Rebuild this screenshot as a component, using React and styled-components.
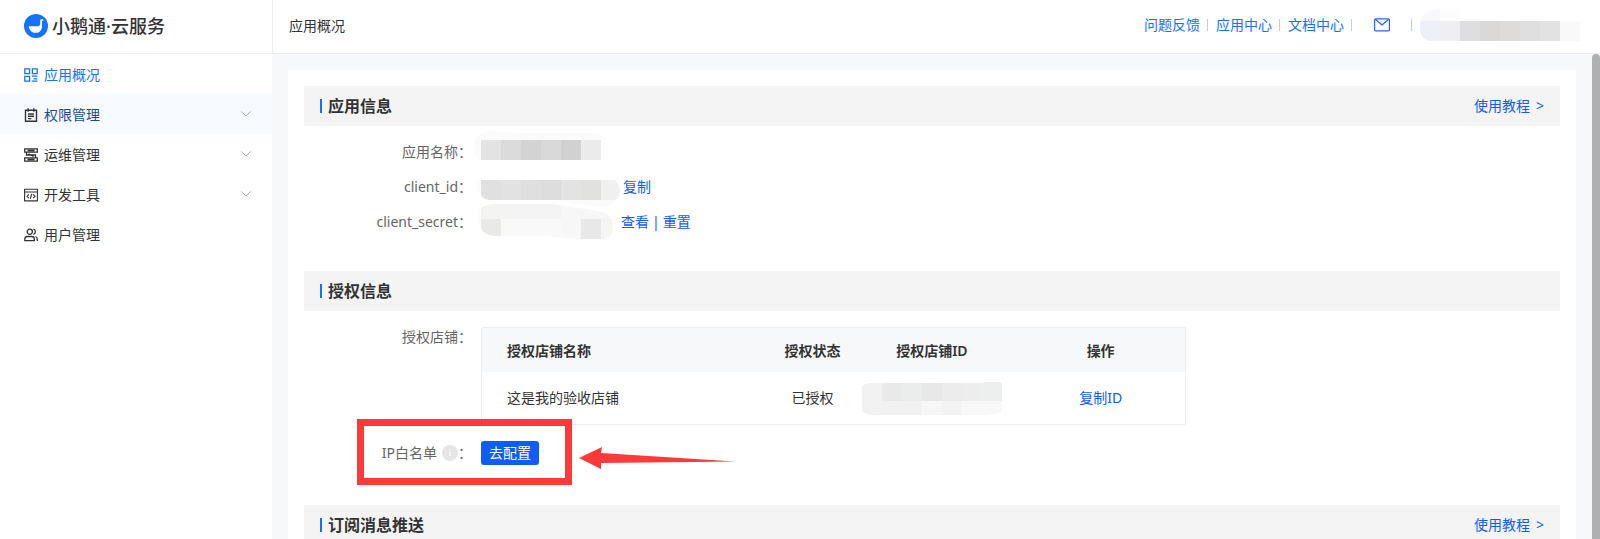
import styled, { createGlobalStyle } from "styled-components";

const GlobalStyle = createGlobalStyle`
    * {
        box-sizing: border-box;
    }
    body {
        margin: 0;
        font-family: "Noto Sans", "Noto Sans CJK SC", sans-serif;
        font-size: 14px;
        line-height: 20px;
        color: #333;
        background-color: #fff;
    }
`

const Page = styled.div`
    display: flex;
    flex-direction: column;
    height: 100vh;
`

const Header = styled.header`
    display: flex;
    flex: none;
    height: 54px;
    border-bottom: 1px solid #ebedf0;
`

const Brand = styled.div`
    display: flex;
    align-items: center;
    flex: none;
    width: 273px;
    padding: 0 24px 2px;
    gap: 4px;
    border-right: 1px solid #ebedf0;
    font-size: 18px;
    font-weight: 500;
    line-height: 24px;
`

const TopBar = styled.div`
    display: flex;
    flex: 1;
    align-items: center;
    justify-content: space-between;
    padding: 0 20px 2px 16px;
`

const PageTitle = styled.h1`
    margin: 0;
    font-size: 14px;
    font-weight: 400;
`

const TopLinks = styled.nav`
    display: flex;
    align-items: center;
    gap: 7px;
    padding-bottom: 2px;
`

const Separator = styled.span`
    width: 1px;
    height: 12px;
    margin-right: 1px;
    background-color: #ccc;
`

const Link = styled.a`
    color: ${(props) => props.$bright ? "#1472ff" : "#105cfb"};
    text-decoration: none;
`

const HelpLink = styled(Link)`
    display: flex;
    gap: 6px;
`

const MailLink = styled.a`
    display: flex;
    margin: 0 14px;
`

const Body = styled.div`
    display: flex;
    flex: 1;
    min-height: 0;
`

const Sidebar = styled.nav`
    flex: none;
    width: 272px;
`

const MenuItem = styled.a`
    display: flex;
    align-items: center;
    height: 40px;
    padding: 2px 20px 0 24px;
    gap: 6px;
    text-decoration: none;
    color: ${(props) => props.$color || "#333"};
    background-color: ${(props) => props.$hover ? "#f7fbff" : "transparent"};

    svg {
        flex: none;
    }
`

const MenuText = styled.span`
    flex: 1;
`

const Arrow = styled.svg`
    margin-bottom: 2px;
`

const Content = styled.main`
    flex: 1;
    min-width: 0;
    padding: 16px 16px 0;
    overflow-y: auto;
    scrollbar-width: none;
    background-color: #f6f8fa;
`

const Card = styled.div`
    padding: 16px;
    background-color: #fff;
`

const ScrollTrack = styled.div`
    flex: none;
    width: 8px;
    background-color: #f6f8fa;
    overflow: hidden;
`

const ScrollThumb = styled.div`
    height: 100%;
    border-radius: 4px 4px 0 0;
    background-color: #b0b0b2;
`

const SectionHead = styled.div`
    display: flex;
    align-items: center;
    justify-content: space-between;
    height: 40px;
    padding: 0 16px;
    background-color: #f4f4f4;
`

const SectionTitle = styled.h2`
    display: flex;
    align-items: center;
    gap: 6px;
    margin: 0;
    font-size: 16px;
    font-weight: 600;

    &::before {
        content: "";
        width: 2px;
        height: 14px;
        background-color: #1472ff;
    }
`

const InfoList = styled.div`
    padding: 8px 0 32px;
`

const AuthList = styled.div`
    display: flex;
    flex-direction: column;
    gap: 16px;
    padding: 16px 0 40px;
`

const Row = styled.div`
    display: flex;
    align-items: ${(props) => props.$top ? "flex-start" : "center"};
    min-height: ${(props) => props.$tall ? "35px" : "24px"};
`

const Label = styled.div`
    display: flex;
    align-items: center;
    justify-content: flex-end;
    flex: none;
    width: 168px;
    margin-right: 9px;
    color: #666;
`

const Value = styled.div`
    display: flex;
    align-items: center;
    flex: 1;
    gap: 3px;
    color: #105cfb;

    svg {
        flex: none;
        overflow: visible;
    }
`

const ShopTable = styled.table`
    width: 100%;
    max-width: 705px;
    border: 1px solid #ebedf0;
    border-radius: 2px;
    border-spacing: 0;
    table-layout: fixed;
    text-align: center;

    th {
        height: 44px;
        padding: 2px 0 0;
        font-weight: 600;
        background-color: #f6f8fa;
    }
    td {
        height: 52px;
        padding: 0;
    }
    th:first-child,
    td:first-child {
        padding-left: 25px;
        text-align: left;
    }
    svg {
        display: block;
        margin: 0 auto;
    }
`

const InfoDot = styled.span`
    display: flex;
    margin-left: 5px;
`

const ConfigButton = styled.button`
    height: 24px;
    padding: 0 8px;
    border: none;
    border-radius: 3px;
    color: #fff;
    background-color: #105cfb;
    font: inherit;
    cursor: pointer;
`

const Highlighted = styled.div`
    position: relative;
`

const RedBox = styled.div`
    position: absolute;
    top: -22px;
    left: 53px;
    width: 215px;
    height: 66px;
    border: 7px solid #fc3a39;
    pointer-events: none;
`

const RedArrow = styled.svg`
    position: absolute;
    top: 5px;
    left: 275px;
    pointer-events: none;
`

const Logo = () => (
    <svg width="24" height="24" viewBox="0 0 24 24" aria-hidden="true">
        <circle cx="12" cy="12" r="12" fill="#1472ff" />
        <path d="M4.800 12.200H13.600C15.200 12.200 16.200 11.200 16.200 9.600V7C16.200 5.600 17 4.900 18.200 4.900L19.800 6.200L18 6.900V12.400C18 16.200 15.400 18.800 11.600 18.800C7.800 18.800 5 16.200 4.800 12.200z" fill="#fff" />
    </svg>
)

const iconProps = {
    width: 14,
    height: 14,
    viewBox: "0 0 14 14",
    fill: "none",
    stroke: "currentColor",
    "aria-hidden": true,
}

const OverviewIcon = () => (
    <svg {...iconProps} strokeWidth="1.3">
        <path d="M.8.8h4.800v4.800H.8zM8.400.8h4.800v4.800H8.400zM.8 8.400h4.800v4.800H.8zM7.800 8.200h5.600M9.600 10.800h3.800M7.800 13.200h5.600" />
    </svg>
)

const PermissionIcon = () => (
    <svg {...iconProps} stroke="#333" strokeWidth="1.4">
        <path d="M1.500 2.200h11v11h-11zM4.200.3v3.400M9.800.3v3.400M4 6h6M4 8.300h6M4 10.600h3.400" />
    </svg>
)

const OperateIcon = () => (
    <svg {...iconProps} strokeWidth="1.3">
        <path d="M.7.8h12.600v3.400H.7zM.7 9.800h12.600v3.400H.7zM3.500 2.500h7M3.500 11.500h7M2.500 4.400v2.600h9v2.600M4.500 5.800l5 2.600" />
    </svg>
)

const DevIcon = () => (
    <svg {...iconProps} strokeWidth="1.1">
        <path d="M.6 1.300h12.800v11.600H.6zM.6 4h12.800M4.800 6.400 3 8.300l1.800 1.900M9.200 6.400 11 8.300l-1.800 1.900M7.700 6l-1.400 4.800" />
    </svg>
)

const UserIcon = () => (
    <svg {...iconProps} strokeWidth="1.3">
        <circle cx="5.800" cy="3.700" r="2.600" />
        <path d="M.8 12.600v-1.400c0-1.800 1.200-2.700 2.800-2.700h4c1.600 0 2.800.9 2.800 2.700v1.400zM9.400 1.100c2.600.4 2.600 4.600 0 5.200M11.400 8.500c1.200.4 1.900 1.300 1.900 2.700v1.900" />
    </svg>
)

const Chevron = () => (
    <Arrow width="12" height="12" viewBox="0 0 12 12" fill="none" stroke="#a4a9b2" aria-hidden="true">
        <path d="M1.500 3.500 6 8 10.500 3.500" />
    </Arrow>
)

const MailIcon = () => (
    <svg width="16" height="14" viewBox="0 0 16 14" fill="none" stroke="#2b62f6" strokeWidth="1.2" aria-hidden="true">
        <rect x=".6" y=".8" width="14.8" height="12" rx="1" />
        <path d="m1.500 1.500 6.500 5.500 6.500-5.500" />
    </svg>
)

const InfoIcon = () => (
    <svg width="16" height="16" viewBox="0 0 16 16" aria-hidden="true">
        <circle cx="8" cy="8" r="8" fill="#e6e6e6" />
        <path d="M7.500 4h1v1h-1zM7.500 6.400h1v5.200h-1z" fill="#fff" />
    </svg>
)

// a band of colour tiles, with an optional pale halo behind it
const Mosaic = ({ id, width, height, top = 0, clip, halo, tiles }) => (
    <svg width={width} height={height} viewBox={`0 ${-top} ${width} ${height}`} aria-hidden="true">
        {halo && <path d={halo} fill="#fbfbfb" />}
        <clipPath id={id}>
            <path d={clip} />
        </clipPath>
        <g clipPath={`url(#${id})`}>
            {tiles.map(([x, y, w, h, fill]) => (
                <rect key={`${x}-${y}`} x={x} y={y} width={w} height={h} fill={fill} />
            ))}
        </g>
    </svg>
)

const accountTiles = [
    [0, 0, 20, 12, "#f9f9fc"], [20, 0, 20, 12, "#fdfdfd"],
    [0, 12, 20, 20, "#efeff9"], [20, 12, 20, 20, "#efeff2"],
    [40, 12, 20, 20, "#dedede"], [60, 12, 20, 20, "#d9d9d9"],
    [80, 12, 20, 20, "#dddcda"], [100, 12, 20, 20, "#dfdfdf"],
    [120, 12, 20, 20, "#e2e2e2"], [140, 12, 20, 20, "#f9f9f9"],
]

const nameTiles = [
    [0, 0, 20, 20, "#e3e3e3"], [20, 0, 20, 20, "#dbdbdb"],
    [40, 0, 20, 20, "#d3d3d3"], [60, 0, 20, 20, "#d9d9d9"],
    [80, 0, 20, 20, "#d1d1d1"], [100, 0, 20, 20, "#ebebeb"],
]

const idTiles = [
    [0, 0, 20, 20, "#e0e0e0"], [20, 0, 20, 20, "#e2e2e2"],
    [40, 0, 20, 20, "#dfdfdf"], [60, 0, 20, 20, "#dddddd"],
    [80, 0, 20, 20, "#e3e3e3"], [100, 0, 20, 20, "#e1e1df"],
    [120, 0, 20, 20, "#f0f0f0"],
]

const secretTiles = [
    [0, 0, 20, 15, "#f4f4f2"], [20, 0, 60, 15, "#f4f4f4"], [80, 0, 60, 15, "#f7f7f7"],
    [0, 15, 20, 20, "#e9e9e7"], [20, 15, 60, 20, "#f9f9f9"], [80, 15, 20, 20, "#f7f7f7"],
    [100, 15, 20, 20, "#e8e8e8"], [120, 15, 20, 20, "#f5f5f5"],
]

const shopTiles = [
    [0, 0, 20, 33, "#f2f2f2"],
    [20, 0, 20, 19, "#e9e9e9"], [40, 0, 20, 19, "#ebecec"],
    [60, 0, 20, 19, "#e8e8e9"], [80, 0, 20, 19, "#ececec"],
    [100, 0, 20, 19, "#ededed"], [120, 0, 20, 19, "#edefef"],
    [20, 19, 40, 14, "#f1f1f1"], [60, 19, 20, 14, "#f6f6f6"],
    [80, 19, 20, 14, "#f3f3f3"], [100, 19, 40, 14, "#f8f8f8"],
]

const menu = [
    { text: "应用概况", Icon: OverviewIcon, color: "#1472ff" },
    { text: "权限管理", Icon: PermissionIcon, color: "#1d4b8f", hover: true, sub: true },
    { text: "运维管理", Icon: OperateIcon, sub: true },
    { text: "开发工具", Icon: DevIcon, sub: true },
    { text: "用户管理", Icon: UserIcon },
]

const Section = ({ title, help }) => (
    <SectionHead>
        <SectionTitle>{title}</SectionTitle>
        {help && <HelpLink href="#help">使用教程<span>&gt;</span></HelpLink>}
    </SectionHead>
)

const App = () =>
{
    return (
        <>
        <GlobalStyle/>
        <Page>
            <Header>
                <Brand>
                    <Logo/>
                    <span>小鹅通·云服务</span>
                </Brand>
                <TopBar>
                    <PageTitle>应用概况</PageTitle>
                    <TopLinks>
                        <Link $bright href="#feedback">问题反馈</Link>
                        <Separator/>
                        <Link $bright href="#apps">应用中心</Link>
                        <Separator/>
                        <Link $bright href="#docs">文档中心</Link>
                        <Separator/>
                        <MailLink href="#mail" aria-label="mail"><MailIcon/></MailLink>
                        <Separator/>
                        <Mosaic
                            id="account"
                            width={160}
                            height={32}
                            clip="M0 18Q0 0 22 0H160V32H12Q0 32 0 18z"
                            tiles={accountTiles}
                        />
                    </TopLinks>
                </TopBar>
            </Header>

            <Body>
                <Sidebar>
                    {menu.map(({ text, Icon, color, hover, sub }) => (
                        <MenuItem key={text} href="#menu" $color={color} $hover={hover}>
                            <Icon/>
                            <MenuText>{text}</MenuText>
                            {sub && <Chevron/>}
                        </MenuItem>
                    ))}
                </Sidebar>

                <Content>
                    <Card>
                        <Section title="应用信息" help/>
                        <InfoList>
                            <Row $tall>
                                <Label>应用名称：</Label>
                                <Value>
                                    <Mosaic
                                        id="name"
                                        width={120}
                                        height={24}
                                        clip="M0 0H120V20H0z"
                                        halo="M-7 4Q-6 -8 12 -9L40 -7H112Q124 -6 126 0H120V20H0Q-8 18 -7 4z"
                                        tiles={nameTiles}
                                    />
                                </Value>
                            </Row>
                            <Row $tall>
                                <Label>client_id：</Label>
                                <Value>
                                    <Mosaic
                                        id="client"
                                        width={139}
                                        height={26}
                                        top={6}
                                        clip="M0 0H134Q139 4 139 11T134 20H8Q2 19 0 15z"
                                        halo="M-5 4Q-4 0 0 0V15Q-5 12 -5 4zM78 20H134Q130 26 122 27L78 21z"
                                        tiles={idTiles}
                                    />
                                    <Link href="#copy">复制</Link>
                                </Value>
                            </Row>
                            <Row $tall>
                                <Label>client_secret：</Label>
                                <Value>
                                    <Mosaic
                                        id="secret"
                                        width={137}
                                        height={35}
                                        clip="M0 4Q4 0 16 0H70L118 7Q132 10 132 22T122 35H100L60 32H12Q2 30 0 24z"
                                        halo="M-3 6L0 4V24L-3 18z"
                                        tiles={secretTiles}
                                    />
                                    <Link href="#show">查看</Link>
                                    |
                                    <Link href="#reset">重置</Link>
                                </Value>
                            </Row>
                        </InfoList>

                        <Section title="授权信息"/>
                        <AuthList>
                            <Row $top>
                                <Label>授权店铺：</Label>
                                <ShopTable>
                                    <colgroup>
                                        <col width="42%"/>
                                        <col width="10%"/>
                                        <col width="24%"/>
                                        <col width="24%"/>
                                    </colgroup>
                                    <thead>
                                        <tr>
                                            <th>授权店铺名称</th>
                                            <th>授权状态</th>
                                            <th>授权店铺ID</th>
                                            <th>操作</th>
                                        </tr>
                                    </thead>
                                    <tbody>
                                        <tr>
                                            <td>这是我的验收店铺</td>
                                            <td>已授权</td>
                                            <td>
                                                <Mosaic
                                                    id="shop"
                                                    width={140}
                                                    height={33}
                                                    clip="M0 5Q0 2 8 1H122V0H138L140 2V30Q136 32 128 32V33H8Q0 31 0 28z"
                                                    tiles={shopTiles}
                                                />
                                            </td>
                                            <td><Link href="#copy-id">复制ID</Link></td>
                                        </tr>
                                    </tbody>
                                </ShopTable>
                            </Row>
                            <Highlighted>
                                <Row>
                                    <Label>IP白名单<InfoDot><InfoIcon/></InfoDot>：</Label>
                                    <Value>
                                        <ConfigButton type="button">去配置</ConfigButton>
                                    </Value>
                                </Row>
                                <RedBox/>
                                <RedArrow width="156" height="24" viewBox="0 0 156 24" aria-hidden="true">
                                    <path d="M0 12 23 1l-1 6 134 8.500L22 17v6z" fill="#fc3a39" />
                                </RedArrow>
                            </Highlighted>
                        </AuthList>

                        <Section title="订阅消息推送" help/>
                    </Card>
                </Content>
                <ScrollTrack><ScrollThumb/></ScrollTrack>
            </Body>
        </Page>
        </>
    );
}

export default App;
